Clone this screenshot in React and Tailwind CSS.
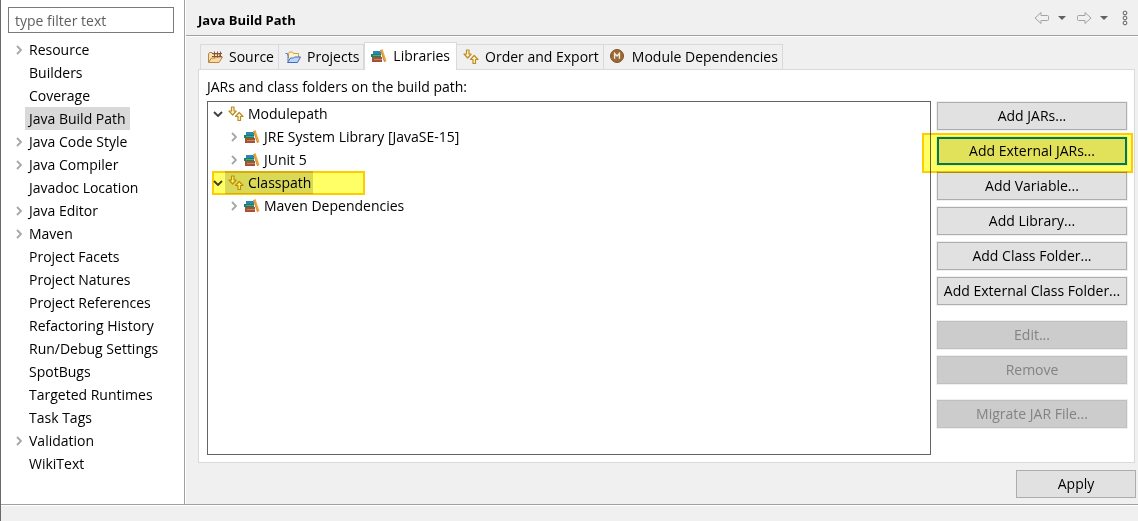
import React from 'react'

const categories = [
  { label: 'Resource', children: true },
  { label: 'Builders' },
  { label: 'Coverage' },
  { label: 'Java Build Path', selected: true },
  { label: 'Java Code Style', children: true },
  { label: 'Java Compiler', children: true },
  { label: 'Javadoc Location' },
  { label: 'Java Editor', children: true },
  { label: 'Maven', children: true },
  { label: 'Project Facets' },
  { label: 'Project Natures' },
  { label: 'Project References' },
  { label: 'Refactoring History' },
  { label: 'Run/Debug Settings' },
  { label: 'SpotBugs' },
  { label: 'Targeted Runtimes' },
  { label: 'Task Tags' },
  { label: 'Validation', children: true },
  { label: 'WikiText' },
]

function ChevronRight() {
  return (
    <svg width="6" height="10" viewBox="0 0 6 10" fill="none" stroke="#a6a6a6" strokeWidth="1.8">
      <path d="M1 1l4 4-4 4" />
    </svg>
  )
}

function ChevronDown() {
  return (
    <svg width="10" height="6" viewBox="0 0 10 6" fill="none" stroke="#404040" strokeWidth="1.9">
      <path d="M1 1l4 4 4-4" />
    </svg>
  )
}

function SourceIcon() {
  return (
    <svg width="16" height="16" viewBox="0 0 16 16" fill="none" stroke="#b88347" strokeLinejoin="round">
      <path d="M1.5 13V5l1-1.500h2.500l1 1.500h6.500v4" fill="#fbe3ae" />
      <path d="M1.500 13.500L4.500 9h4l1-1h6l-3.500 5.500z" fill="#fadb9b" />
      <path d="M5 4.500h10M5 7.500h10M7.500 2.500v6M10.500 2.500v6M13.500 2.500v5.500" stroke="#855548" />
    </svg>
  )
}

function ProjectsIcon() {
  return (
    <svg width="16" height="16" viewBox="0 0 16 16" fill="none" strokeLinejoin="round">
      <path d="M3.500 9V4.500l1-1.500h3l1 1.500h5V8" fill="#fdf2c8" stroke="#c9a04c" />
      <path d="M0.500 4.500h2l.5 3v5" stroke="#5574b8" />
      <path d="M2.500 13.500L5.500 9h3l1-1h6l-3 5.500z" fill="#b9d7fc" stroke="#4668bd" />
    </svg>
  )
}

function LibraryIcon() {
  return (
    <svg width="16" height="16" viewBox="0 0 16 16">
      <path d="M2 3h7l1 1v2H2z" fill="#2588b8" />
      <path d="M0 6h10v3H0z" fill="#1c7f62" />
      <path d="M2 7h8v1H2z" fill="#4aa985" />
      <path d="M1 9h10v5H1z" fill="#a55234" />
      <path d="M3 11h8v1H3z" fill="#c98264" />
      <path d="M9.500 2l2-1L15.500 13l-2 1z" fill="#eda53e" />
      <path d="M9.500 2l4 12" stroke="#c77925" strokeWidth="0.8" />
    </svg>
  )
}

function OrderIcon() {
  return (
    <svg width="16" height="16" viewBox="0 0 16 16" fill="#fff6c9" stroke="#bd8c26" strokeWidth="1.2" strokeLinejoin="round">
      <path d="M3.500 1h2.500v4h2.200L4.700 9 1 5h2.500z" />
      <path d="M10 14.500h2.500v-4h2.500L11.200 6.500 7.500 10.500H10z" />
    </svg>
  )
}

function ModuleIcon() {
  return (
    <svg width="16" height="16" viewBox="0 0 16 16">
      <circle cx="7" cy="7" r="6.500" fill="#9b6935" stroke="#7f5429" />
      <path d="M4.600 9.800V4.500L7 7l2.400-2.500v5.300" fill="none" stroke="#f5ebdf" strokeWidth="1.400" />
    </svg>
  )
}

function ArrowIcon({ className }) {
  return (
    <svg className={className} width="16" height="14" viewBox="0 0 16 14" fill="none" stroke="#a3a3a3" strokeLinejoin="round">
      <path d="M1 7l6-5.500v3h6.500a1 1 0 0 1 1 1v3a1 1 0 0 1-1 1H7v3z" />
    </svg>
  )
}

function CaretIcon() {
  return (
    <svg width="8" height="4" viewBox="0 0 8 4" fill="#606066">
      <path d="M0 0h8L4 4z" />
    </svg>
  )
}

function MenuIcon() {
  return (
    <svg width="6" height="16" viewBox="0 0 6 16" fill="none" stroke="#5f5f5f">
      <circle cx="3" cy="3" r="1.900" />
      <circle cx="3" cy="8" r="1.900" />
      <circle cx="3" cy="13" r="1.900" />
    </svg>
  )
}

function Sidebar() {
  return (
    <aside className="w-[184px] shrink-0 border-r border-[#a0a0a0] bg-white pt-[7px]">
      <input
        type="text"
        aria-label="Filter"
        placeholder="type filter text"
        className="ml-[7px] block h-[26px] w-[166px] border border-[#7a7a7a] px-1.5 placeholder:text-[#606060]"
      />
      <ul className="mt-[5px]">
        {categories.map(({ label, children, selected }) => (
          <li key={label} className="flex h-[23px] items-center pl-[15px]">
            <span className="w-[9px] shrink-0">{children && <ChevronRight />}</span>
            <span className={selected ? 'bg-[#d9d9d9] px-1 leading-[23px]' : 'px-1 leading-[23px]'}>{label}</span>
          </li>
        ))}
      </ul>
    </aside>
  )
}

function Tab({ icon, label, active }) {
  return (
    <button
      type="button"
      role="tab"
      aria-selected={!!active}
      className={
        active
          ? '-mb-px flex h-[28px] items-center gap-1.5 border border-b-0 border-[#d9d9d9] bg-white pr-1.5 pb-0.5 pl-1.5'
          : 'flex h-[25px] items-center gap-1.5 border border-b-0 border-l-0 border-[#d9d9d9] pr-1 pl-1.5 first:border-l'
      }
    >
      {icon}
      {label}
    </button>
  )
}

function TreeRow({ label, icon, level = 0, expanded, selected }) {
  return (
    <li className={level ? 'flex h-[23px] items-center pl-[23px]' : 'flex h-[23px] items-center pl-[5px]'}>
      <span className={level ? 'w-[10px]' : 'w-[12px]'}>{expanded ? <ChevronDown /> : <ChevronRight />}</span>
      <span className={selected ? 'flex h-full items-center gap-1 bg-[#d9d9d9] pr-0.5 pl-[3px]' : 'flex h-full items-center gap-1 pr-0.5 pl-[3px]'}>
        {icon}
        {label}
      </span>
    </li>
  )
}

function PushButton({ children, disabled, focused }) {
  return (
    <button
      type="button"
      disabled={disabled}
      className={
        focused
          ? 'h-[28px] w-full border-2 border-[#0078d7] bg-[#e1e1e1] whitespace-nowrap ring-1 ring-[#f0f0f0]'
          : 'h-[28px] w-full border border-[#adadad] bg-[#e1e1e1] whitespace-nowrap ring-1 ring-[#f0f0f0] disabled:border-[#bfbfbf] disabled:bg-[#cccccc] disabled:text-[#838383]'
      }
    >
      {children}
    </button>
  )
}

export default function App() {
  return (
    <div className="flex min-h-screen flex-col border-l border-[#696969] bg-[#f0f0f0] font-['Open_Sans','Noto_Sans',sans-serif] text-[14px] leading-[20px] text-black">
      <div className="flex flex-1">
        <Sidebar />
        <main className="flex min-w-0 flex-1 flex-col border-l border-white">
          <header className="flex h-[36px] items-center justify-between border-b border-[#a0a0a0] pr-2.5 pl-3 shadow-[0_1px_0_#ffffff]">
            <h1 className="pt-1 text-[13px] font-bold">Java Build Path</h1>
            <div className="flex items-center">
              <button type="button" aria-label="Back"><ArrowIcon /></button>
              <button type="button" aria-label="Back history" className="ml-2"><CaretIcon /></button>
              <button type="button" aria-label="Forward" className="ml-2.5"><ArrowIcon className="rotate-180" /></button>
              <button type="button" aria-label="Forward history" className="ml-2"><CaretIcon /></button>
              <button type="button" aria-label="View menu" className="ml-3.5"><MenuIcon /></button>
            </div>
          </header>

          <div className="flex flex-1 flex-col pt-1.5 pr-[3px] pl-3">
            <div role="tablist" className="z-10 flex items-end pl-0.5">
              <Tab icon={<SourceIcon />} label="Source" />
              <Tab icon={<ProjectsIcon />} label="Projects" />
              <Tab icon={<LibraryIcon />} label="Libraries" active />
              <Tab icon={<OrderIcon />} label="Order and Export" />
              <Tab icon={<ModuleIcon />} label="Module Dependencies" />
            </div>

            <section className="flex flex-1 flex-col border border-[#d9d9d9] bg-white pt-[7px] pr-[7px] pb-[7px] pl-2">
              <p>JARs and class folders on the build path:</p>
              <div className="mt-1 flex flex-1 gap-1.5">
                <div className="relative flex-1 border border-[#646464]">
                  <ul>
                    <TreeRow label="Modulepath" icon={<OrderIcon />} expanded />
                    <TreeRow label="JRE System Library [JavaSE-15]" icon={<LibraryIcon />} level={1} />
                    <TreeRow label="JUnit 5" icon={<LibraryIcon />} level={1} />
                    <TreeRow label="Classpath" icon={<OrderIcon />} expanded selected />
                    <TreeRow label="Maven Dependencies" icon={<LibraryIcon />} level={1} />
                  </ul>
                  <div className="pointer-events-none absolute top-[69px] left-1 h-[24px] w-[153px] border-2 border-[#ffcc00] bg-[#ffff66] mix-blend-multiply" />
                </div>
                <div className="mt-px flex w-[190px] flex-col gap-[7px]">
                  <PushButton>Add JARs...</PushButton>
                  <div className="relative">
                    <PushButton focused>Add External JARs...</PushButton>
                    <div className="pointer-events-none absolute -top-1 -right-1.5 h-[40px] w-[211px] border-2 border-[#ffcc00] bg-[#ffff66] mix-blend-multiply" />
                  </div>
                  <PushButton>Add Variable...</PushButton>
                  <PushButton>Add Library...</PushButton>
                  <PushButton>Add Class Folder...</PushButton>
                  <PushButton>Add External Class Folder...</PushButton>
                  <div className="mt-[9px]">
                    <PushButton disabled>Edit...</PushButton>
                  </div>
                  <PushButton disabled>Remove</PushButton>
                  <div className="mt-[9px]">
                    <PushButton disabled>Migrate JAR File...</PushButton>
                  </div>
                </div>
              </div>
            </section>
          </div>

          <div className="flex justify-end pt-[7px] pr-0.5 pb-1.5">
            <div className="w-[120px]">
              <PushButton>Apply</PushButton>
            </div>
          </div>
        </main>
      </div>
      <footer className="h-[17px] border-t border-[#a0a0a0] shadow-[inset_0_1px_0_#ffffff]" />
    </div>
  )
}
